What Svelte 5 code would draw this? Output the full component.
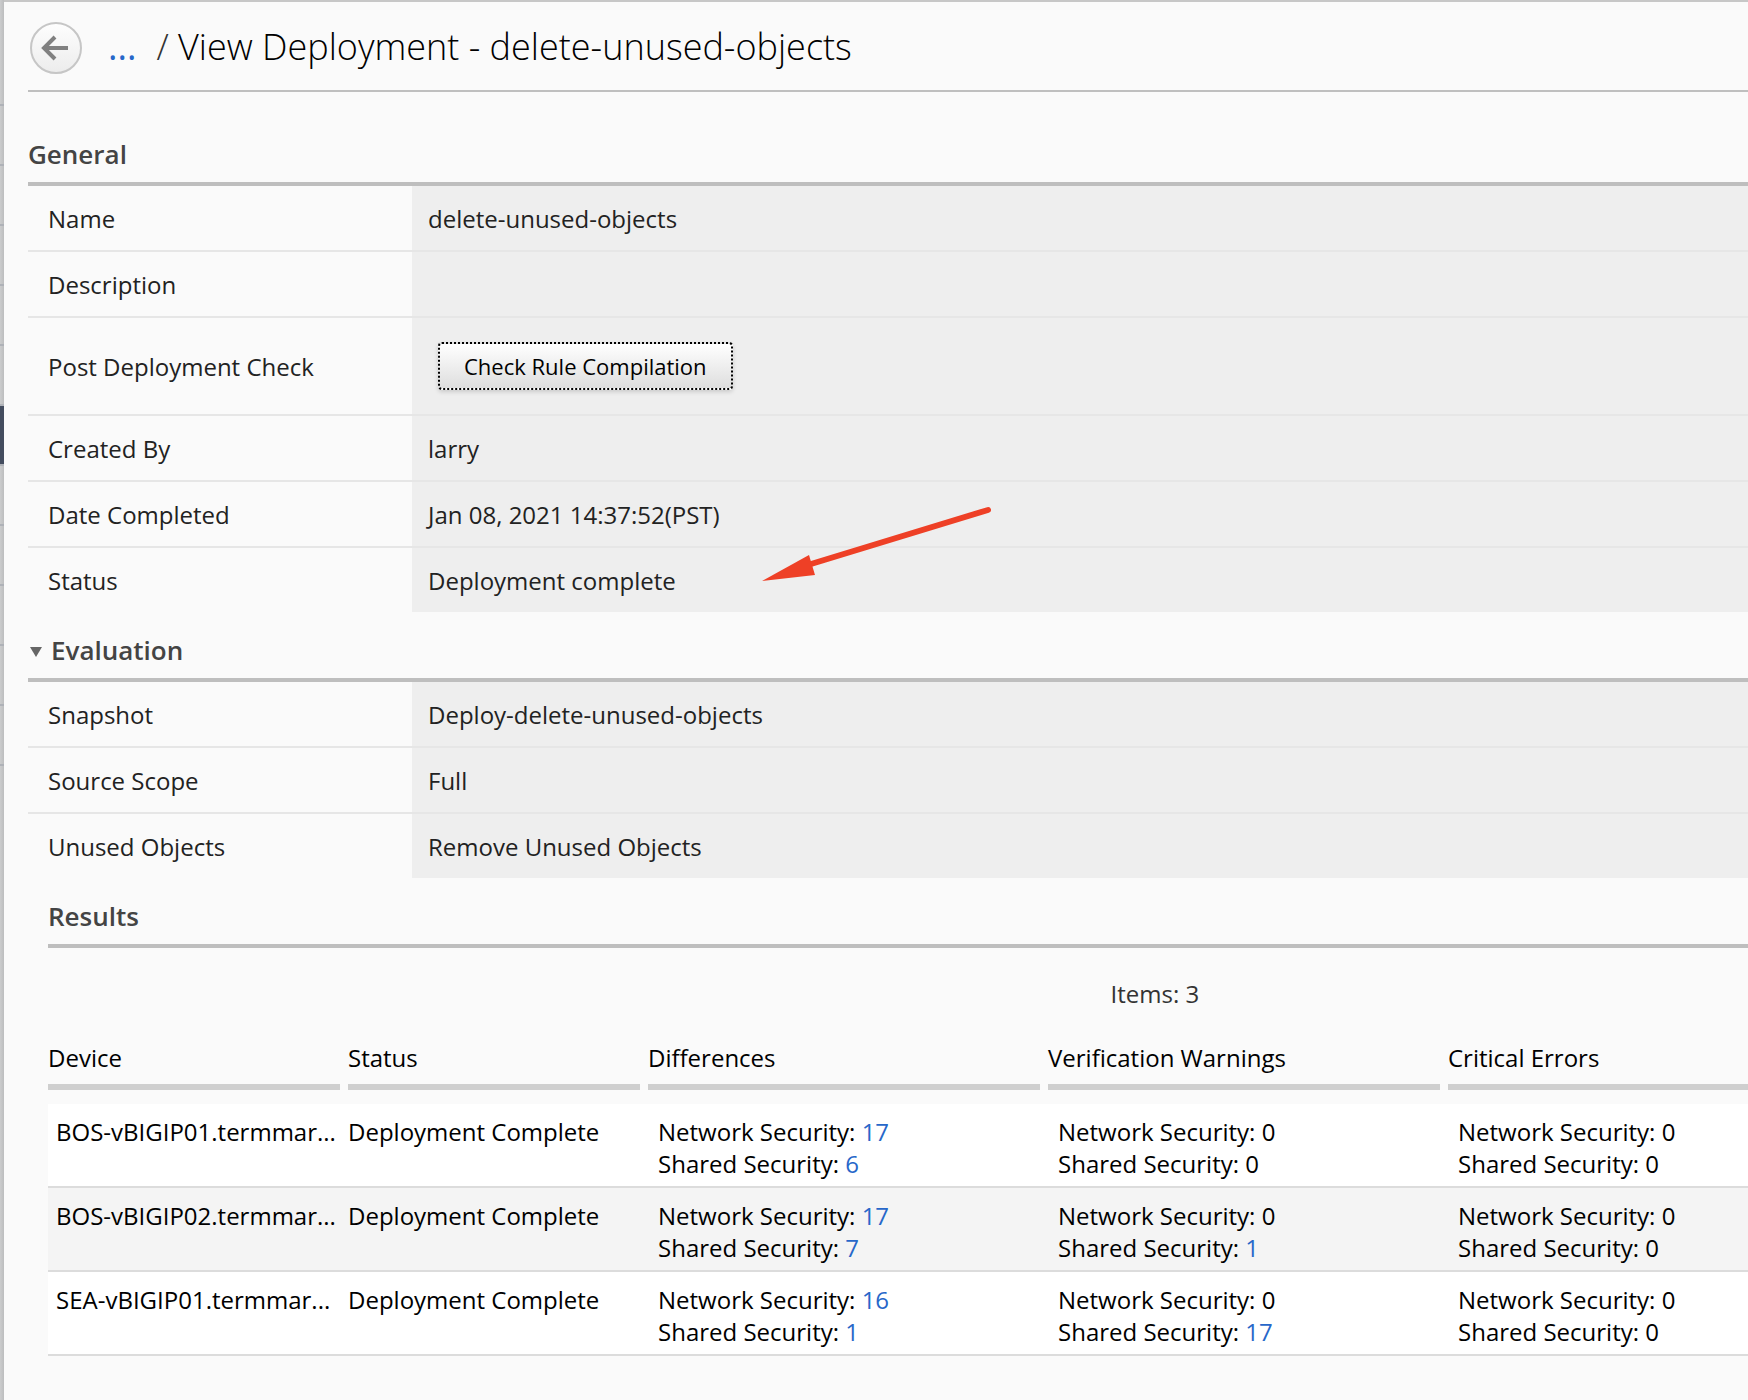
<script>
  const general = [
    { label: 'Name', value: 'delete-unused-objects' },
    { label: 'Description', value: '' },
    { label: 'Post Deployment Check', action: 'Check Rule Compilation' },
    { label: 'Created By', value: 'larry' },
    { label: 'Date Completed', value: 'Jan 08, 2021 14:37:52(PST)' },
    { label: 'Status', value: 'Deployment complete', marked: true }
  ];

  const evaluation = [
    { label: 'Snapshot', value: 'Deploy-delete-unused-objects' },
    { label: 'Source Scope', value: 'Full' },
    { label: 'Unused Objects', value: 'Remove Unused Objects' }
  ];

  const columns = ['Device', 'Status', 'Differences', 'Verification Warnings', 'Critical Errors'];

  // Each counts entry is [network security, shared security].
  const results = [
    { device: 'BOS-vBIGIP01.termmar...', status: 'Deployment Complete', counts: [[17, 6], [0, 0], [0, 0]] },
    { device: 'BOS-vBIGIP02.termmar...', status: 'Deployment Complete', counts: [[17, 7], [0, 1], [0, 0]] },
    { device: 'SEA-vBIGIP01.termmar...', status: 'Deployment Complete', counts: [[16, 1], [0, 17], [0, 0]] }
  ];

  const navItems = Array.from({ length: 12 }, (_, i) => i);
  let expanded = $state(true);
</script>

{#snippet count(label, n)}
  <div>{label}: {#if n}<a href="#details">{n}</a>{:else}{n}{/if}</div>
{/snippet}

{#snippet properties(rows)}
  <dl>
    {#each rows as row}
      <div class="row">
        <dt>{row.label}</dt>
        <dd class:tall={row.action}>
          {#if row.action}
            <button class="action" type="button">{row.action}</button>
          {:else}
            {row.value}
          {/if}
          {#if row.marked}
            <svg class="arrow" width="236" height="84" viewBox="0 0 236 84" aria-hidden="true">
              <path d="M53 62 L230 8" stroke="#ee4026" stroke-width="6" stroke-linecap="round" />
              <path d="M4 79 L51 53 L57 73 Z" fill="#ee4026" />
            </svg>
          {/if}
        </dd>
      </div>
    {/each}
  </dl>
{/snippet}

<div class="shell">
  <div class="nav-edge" aria-hidden="true">
    {#each navItems as item}
      <div class="nav-item" class:selected={item === 6}></div>
    {/each}
  </div>

  <main>
    <header>
      <button class="back" type="button" aria-label="Back">
        <svg width="52" height="52" viewBox="0 0 52 52">
          <defs>
            <linearGradient id="disc" x1="0" y1="0" x2="0" y2="1">
              <stop offset="0" stop-color="#fefefe" />
              <stop offset="1" stop-color="#ececec" />
            </linearGradient>
          </defs>
          <circle cx="26" cy="26" r="25" fill="url(#disc)" stroke="#c6c6c6" stroke-width="2" />
          <path d="M38 26 H15 M25 15 L14 26 L25 37" fill="none" stroke="#808080" stroke-width="4" />
        </svg>
      </button>
      <a class="crumb" href="#deployments">...</a>
      <h1><span class="slash">/</span> View Deployment - delete-unused-objects</h1>
    </header>

    <section>
      <h2 class="first">General</h2>
      {@render properties(general)}
    </section>

    <section>
      <h2>
        <button class="toggle" type="button" aria-expanded={expanded} onclick={() => (expanded = !expanded)}>
          <svg class:closed={!expanded} width="14" height="12" viewBox="0 0 14 12" aria-hidden="true">
            <path d="M1 1 H13 L7 11 Z" fill="#666" />
          </svg>
          Evaluation
        </button>
      </h2>
      {#if expanded}
        {@render properties(evaluation)}
        <div class="results">
          <h2>Results</h2>
          <p class="items">Items: {results.length}</p>
          <table>
            <colgroup>
              <col class="narrow" /><col class="narrow" /><col class="wide" /><col class="wide" /><col />
            </colgroup>
            <thead>
              <tr>
                {#each columns as column}
                  <th scope="col"><div class="head">{column}</div></th>
                {/each}
              </tr>
            </thead>
            <tbody>
              {#each results as result}
                <tr>
                  <td class="device">{result.device}</td>
                  <td>{result.status}</td>
                  {#each result.counts as [network, shared]}
                    <td class="counts">
                      {@render count('Network Security', network)}
                      {@render count('Shared Security', shared)}
                    </td>
                  {/each}
                </tr>
              {/each}
            </tbody>
          </table>
        </div>
      {/if}
    </section>
  </main>
</div>

<style>
  :global(body) {
    background: #fafafa;
    overflow-x: hidden;
  }

  .shell {
    display: flex;
    min-height: 100vh;
    box-sizing: border-box;
    font-family: 'Open Sans', 'Noto Sans', sans-serif;
    font-size: 24px;
    line-height: 32px;
    color: #222;
  }

  .nav-edge {
    display: flex;
    flex-direction: column;
    flex: none;
    width: 4px;
    padding-top: 46px;
    background: linear-gradient(to right, #cbcccd, #bcbdbe);
  }

  .nav-item {
    height: 58px;
    border-bottom: 2px solid #aeb1b7;
  }

  .nav-item.selected {
    background: #434c5e;
  }

  main {
    flex: 1;
    min-width: 0;
    padding-left: 24px;
    border-top: 2px solid #c7c7c7;
    background: #fafafa;
  }

  header {
    display: flex;
    align-items: center;
    height: 88px;
    border-bottom: 2px solid #bfbfbf;
  }

  button {
    font: inherit;
    cursor: pointer;
  }

  a {
    color: #2767c9;
    text-decoration: none;
  }

  .back {
    display: flex;
    margin: 4px 0 0 2px;
    padding: 0;
    border: 0;
    border-radius: 50%;
    background: none;
  }

  .crumb,
  h1 {
    margin: 0;
    padding-top: 2px;
    font-size: 36px;
    line-height: 48px;
    font-weight: 300;
  }

  .crumb {
    margin-left: 26px;
    font-weight: 400;
  }

  h1 {
    margin-left: 20px;
    color: #000;
  }

  .slash {
    color: #333;
  }

  h2 {
    margin: 0;
    padding: 20px 0 10px;
    border-bottom: 4px solid #bebebe;
    color: #444;
    font-size: 26px;
    line-height: 36px;
    font-weight: 600;
  }

  h2.first {
    padding-top: 44px;
  }

  .toggle {
    display: flex;
    align-items: center;
    gap: 8px;
    padding: 0 0 0 1px;
    border: 0;
    background: none;
    color: inherit;
  }

  .toggle svg {
    margin-top: 4px;
  }

  .toggle svg.closed {
    transform: rotate(-90deg);
  }

  dl {
    margin: 0;
  }

  .row {
    display: flex;
    border-bottom: 2px solid #e6e6e6;
  }

  .row:last-child {
    border-bottom: 0;
  }

  dt {
    display: flex;
    align-items: center;
    box-sizing: border-box;
    flex: none;
    width: 384px;
    padding: 2px 0 0 20px;
  }

  dd {
    position: relative;
    flex: 1;
    min-height: 32px;
    margin: 0;
    padding: 17px 16px 15px;
    background: #eee;
  }

  dd.tall {
    padding: 24px 26px;
  }

  .action {
    display: block;
    height: 48px;
    padding: 0 24px;
    border: 2px dotted #000;
    border-radius: 4px;
    background: linear-gradient(#fff, #dedede);
    box-shadow: 0 2px 4px rgba(0, 0, 0, 0.15);
    color: #000;
    font-size: 22px;
  }

  .arrow {
    position: absolute;
    left: 346px;
    top: -46px;
    z-index: 1;
  }

  .results {
    margin-left: 20px;
  }

  .items {
    margin: 0;
    padding: 30px 0 16px 62.5%;
    color: #333;
  }

  table {
    width: 100%;
    border-collapse: collapse;
    table-layout: fixed;
    color: #000;
  }

  .narrow {
    width: 300px;
  }

  .wide {
    width: 400px;
  }

  th {
    padding: 0 8px 14px 0;
    font-weight: 400;
    text-align: left;
  }

  .head {
    padding: 16px 0 10px;
    border-bottom: 6px solid #cfcfcf;
  }

  th:last-child {
    padding-right: 0;
  }

  tbody tr {
    background: #fff;
    box-shadow: inset 0 -2px #dcdcdc;
  }

  tbody tr:nth-child(even) {
    background: #f4f4f4;
  }

  td {
    padding: 12px 0 8px;
    vertical-align: top;
    white-space: nowrap;
  }

  td.device {
    padding-left: 8px;
  }

  td.counts {
    padding-left: 10px;
  }
</style>
